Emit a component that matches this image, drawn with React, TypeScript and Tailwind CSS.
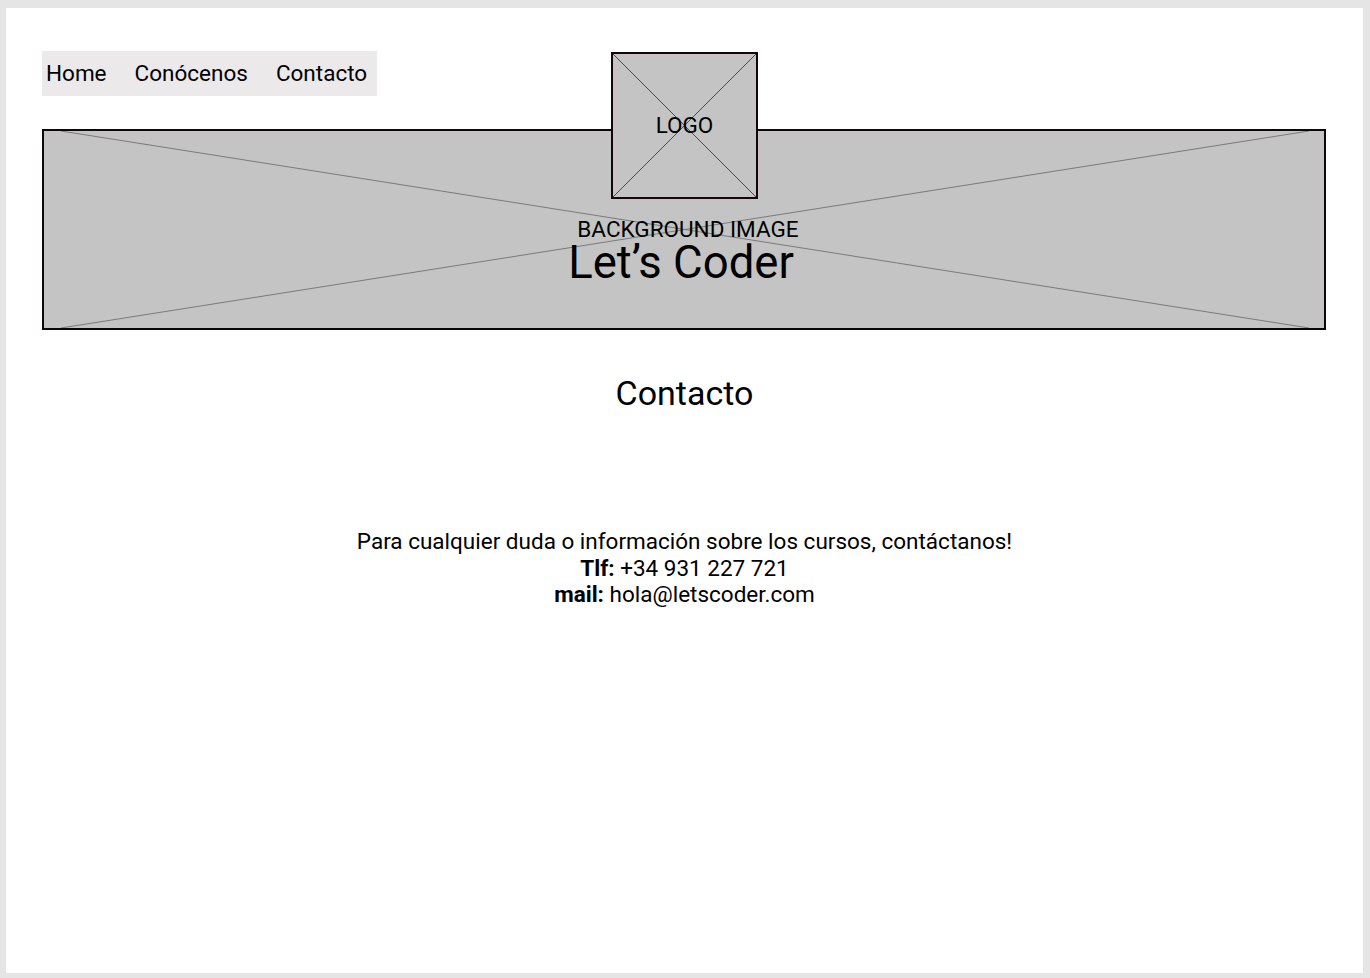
export default function App() {
  return (
    <div className="h-[978px] w-[1370px] overflow-hidden bg-[#e5e5e5] pl-[6px] pt-[8px] font-['Roboto',sans-serif] text-black">
      <div className="h-[965px] w-[1357px] bg-white px-[36px] pt-[43px]">
        {/* nav */}
        <nav className="flex h-[45px] w-[335px] items-center gap-[28px] bg-[#ebe9ea] pl-[4px] pr-[9px] text-[22.5px]">
          <span>Home</span>
          <span>Conócenos</span>
          <span>Contacto</span>
        </nav>

        {/* hero */}
        <div className="relative mt-[33px] h-[201px] w-[1284px] border-2 border-[#0d0707] bg-[#c4c4c4]">
          <svg
            className="absolute inset-0 h-full w-full"
            viewBox="0 0 1280 197"
            preserveAspectRatio="none"
          >
            <line x1="17" y1="0" x2="1265" y2="197" stroke="#7a7a7a" strokeWidth="1" />
            <line x1="17" y1="197" x2="1265" y2="0" stroke="#7a7a7a" strokeWidth="1" />
          </svg>

          <div className="absolute left-[567px] top-[-79px] flex h-[147px] w-[147px] items-center justify-center border-2 border-[#120606] bg-[#c4c4c4]">
            <svg className="absolute inset-0 h-full w-full" viewBox="0 0 143 143" preserveAspectRatio="none">
              <line x1="0" y1="0" x2="143" y2="143" stroke="#4a4a4a" strokeWidth="1" />
              <line x1="0" y1="143" x2="143" y2="0" stroke="#4a4a4a" strokeWidth="1" />
            </svg>
            <span className="relative text-[22.5px] leading-none">LOGO</span>
          </div>

          <div className="relative flex flex-col items-center pt-[85px]">
            <span className="ml-[8px] text-[22.5px] leading-[27px]">BACKGROUND IMAGE</span>
            <span className="-mt-[4px] -ml-[6px] text-[45.5px] leading-[48px]">Let’s Coder</span>
          </div>
        </div>

        {/* contact */}
        <h1 className="mt-[43px] text-center text-[34px] leading-[40px]">Contacto</h1>
        <div className="mt-[115px] text-center text-[22.5px] leading-[26.5px]">
          <p>Para cualquier duda o información sobre los cursos, contáctanos!</p>
          <p>
            <b className="font-bold">Tlf:</b> +34 931 227 721
          </p>
          <p>
            <b className="font-bold">mail:</b> hola@letscoder.com
          </p>
        </div>
      </div>
    </div>
  );
}
